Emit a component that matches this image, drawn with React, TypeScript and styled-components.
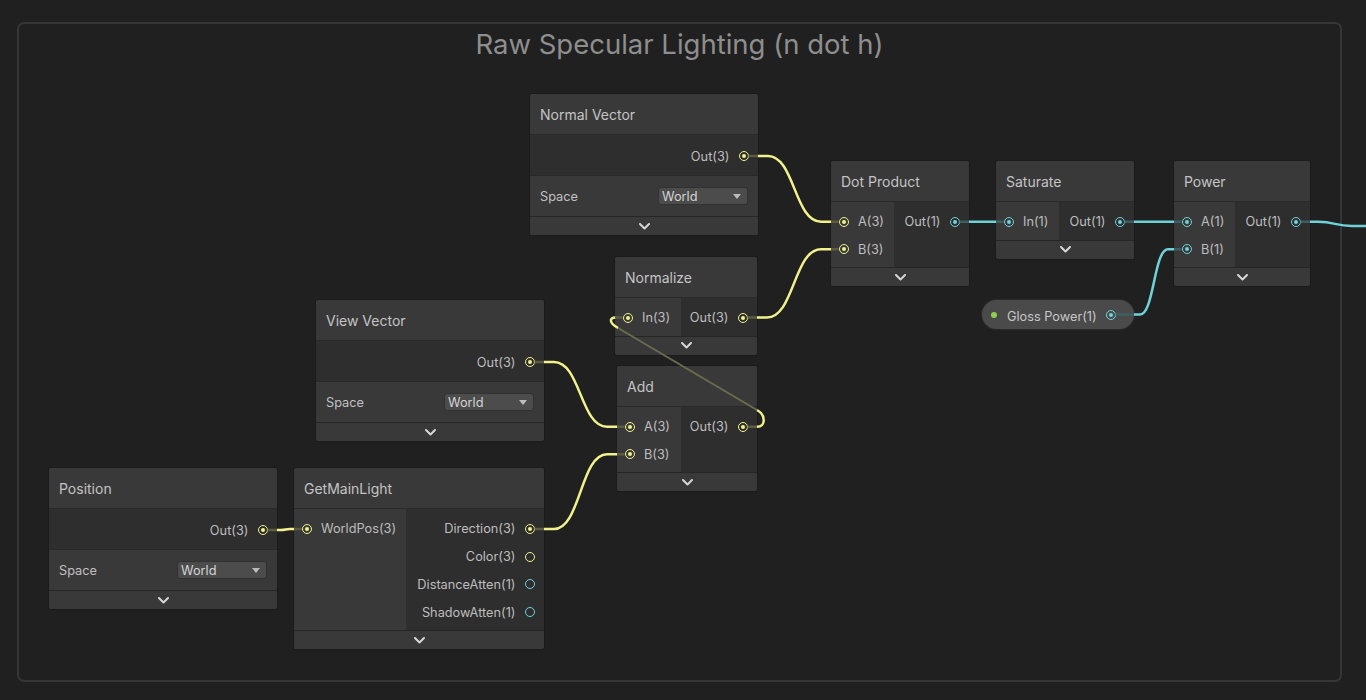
import React from "react";
import styled, { createGlobalStyle } from "styled-components";

const Y = "#f1f28c";
const YDIM = "#5c5c42";
const YMID = "#6b6b4d";
const C = "#6fd2d8";
const CDIM = "#3d5f62";

const Global = createGlobalStyle`
  html, body { margin: 0; padding: 0; background: #202020; }
  body { font-family: Inter, "Noto Sans", "Liberation Sans", sans-serif; -webkit-font-smoothing: antialiased; }
`;

const Canvas = styled.div`
  position: relative;
  width: 1366px;
  height: 700px;
  overflow: hidden;
  background: #202020;
  box-sizing: border-box;
  padding: 22px 24px 18px 17px;
  display: flex;
`;

const Group = styled.div`
  flex: 1;
  border: 2px solid #363636;
  border-radius: 7px;
  display: flex;
  flex-direction: column;
  align-items: center;
`;

const GroupTitle = styled.div`
  margin-top: 4px;
  font-size: 27.5px;
  line-height: 32px;
  color: #8e8e8e;
`;

const NodeBox = styled.div<{ $x: number; $y: number; $w: number }>`
  position: absolute;
  left: ${(p) => p.$x}px;
  top: ${(p) => p.$y}px;
  width: ${(p) => p.$w}px;
  display: flex;
  flex-direction: column;
  background: #2e2e2e;
  border-radius: 2px;
  overflow: hidden;
  box-shadow: 0 0 0 1px #1b1b1b;
`;

const Header = styled.div`
  height: 41px;
  box-sizing: border-box;
  background: #393939;
  border-bottom: 1px solid #2a2a2a;
  padding-left: 10px;
  display: flex;
  align-items: center;
  font-size: 14px;
  color: #c4c4c4;
`;

const PortsBody = styled.div`
  display: flex;
  align-items: stretch;
`;

const InCol = styled.div<{ $w: number }>`
  width: ${(p) => p.$w}px;
  flex: none;
  background: #393939;
  padding: 6px 0 4px;
  display: flex;
  flex-direction: column;
`;

const OutCol = styled.div`
  flex: 1;
  background: #2e2e2e;
  padding: 6px 0 4px;
  display: flex;
  flex-direction: column;
  align-items: flex-end;
`;

const OutSection = styled.div`
  background: #2e2e2e;
  padding: 7.5px 0 5.5px;
  display: flex;
  flex-direction: column;
  align-items: flex-end;
`;

const PortRow = styled.div<{ $dir: "in" | "out"; $h: number }>`
  height: ${(p) => p.$h}px;
  display: flex;
  align-items: center;
  flex-direction: ${(p) => (p.$dir === "in" ? "row" : "row-reverse")};
  gap: ${(p) => (p.$dir === "in" ? 9.5 : 9)}px;
  padding: ${(p) => (p.$dir === "in" ? "0 0 0 7.5px" : "0 9.5px 0 0")};
  font-size: 12.75px;
  color: #bdbdbd;
  white-space: nowrap;
`;

const Ring = styled.span<{ $c: string; $on: boolean }>`
  width: 10px;
  height: 10px;
  flex: none;
  box-sizing: border-box;
  border-radius: 50%;
  border: 1.5px solid ${(p) => p.$c};
  display: flex;
  align-items: center;
  justify-content: center;
  &::after {
    content: "";
    width: 4px;
    height: 4px;
    border-radius: 50%;
    background: ${(p) => p.$c};
    display: ${(p) => (p.$on ? "block" : "none")};
  }
`;

const PropRow = styled.div`
  height: 41px;
  box-sizing: border-box;
  background: #393939;
  border-top: 1px solid #292929;
  display: flex;
  align-items: center;
  justify-content: space-between;
  padding: 0 10px;
  font-size: 12.75px;
  color: #c0c0c0;
`;

const Dropdown = styled.div`
  width: 90px;
  height: 18px;
  box-sizing: border-box;
  background: #4c4c4c;
  border: 1px solid #313131;
  border-radius: 3px;
  display: flex;
  align-items: center;
  justify-content: space-between;
  padding: 0 6px 0 3px;
  font-size: 12.75px;
  color: #d4d4d4;
`;

const Caret = styled.span`
  width: 0;
  height: 0;
  border-left: 4px solid transparent;
  border-right: 4px solid transparent;
  border-top: 5px solid #bcbcbc;
`;

const Collapse = styled.div`
  height: 19px;
  box-sizing: border-box;
  background: #393939;
  border-top: 1px solid #262626;
  display: flex;
  align-items: center;
  justify-content: center;
`;

const Pill = styled.div<{ $x: number; $y: number }>`
  position: absolute;
  left: ${(p) => p.$x}px;
  top: ${(p) => p.$y}px;
  width: 152px;
  height: 29px;
  box-sizing: border-box;
  border-radius: 14.5px;
  background: #4a4a4a;
  display: flex;
  align-items: center;
  padding: 0 18.5px 0 9px;
  font-size: 12.75px;
  color: #c6c6c6;
  box-shadow: 0 0 0 1px #2a2a2a;
`;

const GreenDot = styled.span`
  width: 6px;
  height: 6px;
  border-radius: 50%;
  background: #8fd14f;
  margin-right: 10px;
  flex: none;
`;

const PillLabel = styled.span`
  flex: 1;
  white-space: nowrap;
  padding-top: 3px;
`;

const WireLayer = styled.svg`
  position: absolute;
  left: 0;
  top: 0;
  pointer-events: none;
`;

type Port = { label: string; c: string; on?: boolean };

const Chevron = () => (
  <svg width="11" height="7" viewBox="0 0 11 7">
    <polyline points="1,1 5.5,5.5 10,1" fill="none" stroke="#d6d6d6" strokeWidth="2" strokeLinecap="round" strokeLinejoin="round" />
  </svg>
);

const PortItem = ({ p, dir, h }: { p: Port; dir: "in" | "out"; h: number }) => (
  <PortRow $dir={dir} $h={h}>
    <Ring $c={p.c} $on={!!p.on} />
    <span>{p.label}</span>
  </PortRow>
);

const FnNode = ({
  x, y, w, inW, title, inputs, outputs, rowH = 27.5,
}: { x: number; y: number; w: number; inW: number; title: string; inputs: Port[]; outputs: Port[]; rowH?: number }) => (
  <NodeBox $x={x} $y={y} $w={w}>
    <Header>{title}</Header>
    <PortsBody>
      <InCol $w={inW}>
        {inputs.map((p) => (
          <PortItem key={p.label} p={p} dir="in" h={rowH} />
        ))}
      </InCol>
      <OutCol>
        {outputs.map((p) => (
          <PortItem key={p.label} p={p} dir="out" h={rowH} />
        ))}
      </OutCol>
    </PortsBody>
    <Collapse>
      <Chevron />
    </Collapse>
  </NodeBox>
);

const VecNode = ({ x, y, title }: { x: number; y: number; title: string }) => (
  <NodeBox $x={x} $y={y} $w={228}>
    <Header>{title}</Header>
    <OutSection>
      <PortItem p={{ label: "Out(3)", c: Y, on: true }} dir="out" h={27} />
    </OutSection>
    <PropRow>
      <span>Space</span>
      <Dropdown>
        <span>World</span>
        <Caret />
      </Dropdown>
    </PropRow>
    <Collapse>
      <Chevron />
    </Collapse>
  </NodeBox>
);

type WireDef = { x1: number; y1: number; e1: number; e2: number; x2: number; y2: number; c: string; d: string; s?: number };

const Wire = ({ x1, y1, e1, e2, x2, y2, c, d, s = 10 }: WireDef) => {
  const m = (e1 + e2) / 2;
  const a = Math.min(e1 + s, m);
  const b = Math.max(e2 - s, m);
  return (
    <g fill="none" strokeWidth="2.5">
      <path d={`M${x1 + 5},${y1} H${e1 + 0.5}`} stroke={d} />
      <path d={`M${e2 - 0.5},${y2} H${x2 - 5}`} stroke={d} />
      <path d={`M${e1},${y1} H${a} C${m},${y1} ${m},${y2} ${b},${y2} H${e2}`} stroke={c} />
    </g>
  );
};

const wires: WireDef[] = [
  { x1: 743.5, y1: 156, e1: 758, e2: 831, x2: 843.5, y2: 221.75, c: Y, d: YDIM },
  { x1: 742.5, y1: 317.5, e1: 757, e2: 831, x2: 843.5, y2: 249.25, c: Y, d: YDIM },
  { x1: 529.5, y1: 362, e1: 544, e2: 617, x2: 629.5, y2: 426.75, c: Y, d: YDIM },
  { x1: 529.5, y1: 529, e1: 544, e2: 617, x2: 629.5, y2: 454.25, c: Y, d: YDIM },
  { x1: 262.5, y1: 530, e1: 277, e2: 294, x2: 306.5, y2: 529, c: Y, d: YDIM, s: 4 },
  { x1: 954.5, y1: 221.75, e1: 969, e2: 996, x2: 1008.5, y2: 221.75, c: C, d: CDIM },
  { x1: 1119.5, y1: 221.75, e1: 1134, e2: 1174, x2: 1186.5, y2: 221.75, c: C, d: CDIM },
  { x1: 1110.5, y1: 314.5, e1: 1134, e2: 1174, x2: 1186.5, y2: 249.25, c: C, d: CDIM, s: 6 },
];

export default function App() {
  return (
    <>
      <Global />
      <Canvas>
        <Group>
          <GroupTitle>Raw Specular Lighting (n dot h)</GroupTitle>
        </Group>

        <VecNode x={530} y={94} title="Normal Vector" />
        <VecNode x={316} y={300} title="View Vector" />
        <VecNode x={49} y={468} title="Position" />

        <FnNode
          x={831} y={161} w={138} inW={63} title="Dot Product"
          inputs={[{ label: "A(3)", c: Y, on: true }, { label: "B(3)", c: Y, on: true }]}
          outputs={[{ label: "Out(1)", c: C, on: true }]}
        />
        <FnNode
          x={996} y={161} w={138} inW={63} title="Saturate"
          inputs={[{ label: "In(1)", c: C, on: true }]}
          outputs={[{ label: "Out(1)", c: C, on: true }]}
        />
        <FnNode
          x={1174} y={161} w={136} inW={61} title="Power"
          inputs={[{ label: "A(1)", c: C, on: true }, { label: "B(1)", c: C, on: true }]}
          outputs={[{ label: "Out(1)", c: C, on: true }]}
        />
        <FnNode
          x={615} y={257} w={142} inW={66} title="Normalize"
          inputs={[{ label: "In(3)", c: Y, on: true }]}
          outputs={[{ label: "Out(3)", c: Y, on: true }]}
        />
        <FnNode
          x={617} y={366} w={140} inW={64} title="Add"
          inputs={[{ label: "A(3)", c: Y, on: true }, { label: "B(3)", c: Y, on: true }]}
          outputs={[{ label: "Out(3)", c: Y, on: true }]}
        />
        <FnNode
          x={294} y={468} w={250} inW={112} title="GetMainLight" rowH={27.75}
          inputs={[{ label: "WorldPos(3)", c: Y, on: true }]}
          outputs={[
            { label: "Direction(3)", c: Y, on: true },
            { label: "Color(3)", c: Y },
            { label: "DistanceAtten(1)", c: C },
            { label: "ShadowAtten(1)", c: C },
          ]}
        />

        <Pill $x={982} $y={300}>
          <GreenDot />
          <PillLabel>Gloss Power(1)</PillLabel>
          <Ring $c={C} $on />
        </Pill>

        <WireLayer width="1366" height="700" viewBox="0 0 1366 700">
          {wires.map((w, i) => (
            <Wire key={i} {...w} />
          ))}
          <g fill="none" strokeWidth="2.5">
            <path d="M1300.5,221.75 H1310.5" stroke={CDIM} />
            <path d="M1310,221.75 H1318 C1335,221.75 1335,226 1352,226 H1370" stroke={C} />
            <path d="M747.5,426.75 H757.5" stroke={YDIM} />
            <path d="M757,426.75 C766,426.75 766,415 757,410" stroke={Y} />
            <path d="M757,410 L618,328" stroke={YMID} strokeWidth="2" />
            <path d="M618,328 C609,323 609,317.5 615.5,317.5" stroke={Y} />
            <path d="M615,317.5 H622.5" stroke={YDIM} />
          </g>
        </WireLayer>
      </Canvas>
    </>
  );
}
